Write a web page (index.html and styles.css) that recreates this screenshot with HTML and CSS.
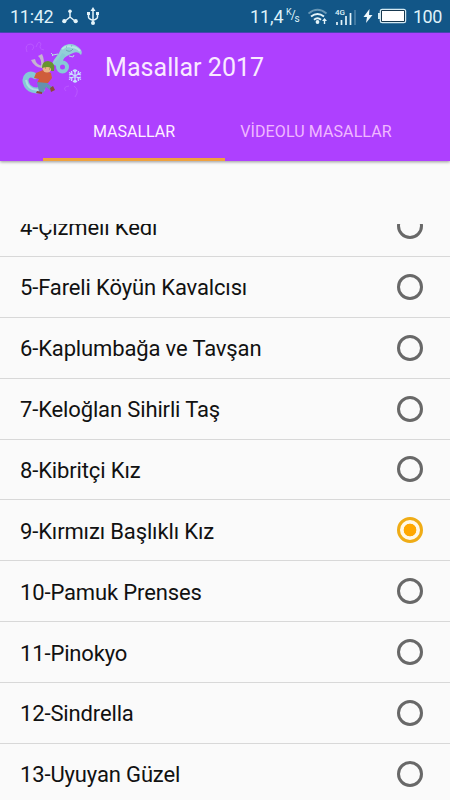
FILE: index.html
```html
<!DOCTYPE html>
<html lang="tr">
<head>
<meta charset="utf-8">
<title>Masallar 2017</title>
<link rel="stylesheet" href="styles.css">
</head>
<body>
<div class="status">
  <span class="clock">11:42</span>
  <svg class="share" width="16" height="15" viewBox="0 0 16 15"><path d="M8 2.500V8M8 8L2.500 12.500M8 8l5.500 4.500" stroke="#e4f4fa" stroke-width="1.500" fill="none"/><g fill="#e4f4fa"><circle cx="8" cy="2.200" r="1.800"/><circle cx="2.300" cy="12.200" r="2.100"/><circle cx="13.700" cy="12.200" r="2.100"/></g></svg>
  <svg class="usb" width="14" height="19" viewBox="0 0 14 19"><path d="M7 2v14M2.500 6v4q0 2 4.500 3.300q4.500-1.300 4.500-3.300V6" fill="none" stroke="#e4f4fa" stroke-width="1.500"/><path d="M7 0l2.500 4h-5z" fill="#e4f4fa"/><path d="M1 5h3v3H1zM10 5h3v3h-3z" fill="#e4f4fa"/><circle cx="7" cy="16" r="2" fill="#e4f4fa"/></svg>
  <span class="speed">11,4</span>
  <span class="unit"><span class="k">K</span><span class="slash">/</span><span class="s">s</span></span>
  <svg class="wifi" width="20" height="17" viewBox="0 0 20 17"><g fill="none" stroke="#e4f4fa" stroke-width="1.900"><path d="M.5 5.500q9-7.500 18 0" opacity=".4"/><path d="M3 8.500q6.500-5 13 0"/><path d="M6 11.700q3.500-3 7 0"/></g><circle cx="9.500" cy="14" r="1.900" fill="#e4f4fa"/><path d="M16.500 10l2.500 3h-1.800v3h-1.400v-3H14z" fill="#e4f4fa"/></svg>
  <span class="cell"><span class="gen">4G</span><svg width="22" height="16" viewBox="0 0 22 16"><path d="M2 15v-3M6.500 15V10M11 15V6M15.500 15V3" stroke="#e4f4fa" stroke-width="1.700"/><path d="M20 15V0" stroke="#e4f4fa" stroke-width="1.500" opacity=".3"/></svg></span>
  <svg class="bolt" width="10" height="14" viewBox="0 0 10 14"><path d="M6.500 0L.5 8H4l-1 6 6.500-8H6z" fill="#f2fafd"/></svg>
  <svg class="battery" width="29" height="16" viewBox="0 0 29 16"><path d="M0 5h2v6H0z" fill="#d5eaf3"/><rect x="1.700" y=".7" width="26.500" height="14.500" rx="2.500" fill="#d5eaf3"/><rect x="3" y="2" width="24" height="12" rx="1" fill="#17384f"/><rect x="4" y="3" width="22" height="10" fill="#fff"/></svg>
  <span class="percent">100</span>
</div>
<header class="appbar">
  <div class="titlebar">
    <svg class="logo" width="62" height="60" viewBox="0 0 62 60">
      <g fill="none" stroke="#bd60ff" stroke-width=".7"><path d="M5 12q-3-8 4-8q5 2 1 6M14 7q3-8 5-3q-3 5 3 6M47 46q-7 1-3 5M52 46q6 4 1 11"/></g>
      <path d="M30 25C31 19 36 16 38 11C41 4 48 3 53 5C59 8 61 12 59 15C55 10 51 13 47 15C41 18 40 20 42 24" fill="#92d0d8"/>
      <ellipse cx="40.500" cy="27" rx="4.500" ry="4.500" fill="none" stroke="#86cbd6" stroke-width="4"/>
      <path d="M33 25Q39 20 42 14" fill="none" stroke="#86cbd6" stroke-width="4"/>
      <path d="M40 9Q45 5 50 7Q54 7 58 11" fill="none" stroke="#b5e6e6" stroke-width="2"/>
      <path d="M44 10q4 3 7-1M44 7h1M49 6h1" stroke="#557f99" fill="none" stroke-width=".6"/>
      <path d="M36 14l-5 1-2-2m2 2-1 1M47 16l4 1 1-2" stroke="#b5dbe2" stroke-width="1" fill="none"/>
      <path d="M13 36C7 32 2 37 4 43C6 50 14 52 20 49" fill="none" stroke="#83c9d7" stroke-width="6" stroke-linecap="round"/>
      <path d="M4 40q2 11 14 10" fill="none" stroke="#aee0e2" stroke-width="2"/>
      <path d="M20 28Q12 27 9 20L13 19Q14 25 21 26ZM19 26Q20 19 16 16L20 14Q23 20 21 26Z" fill="#c5b3d1"/>
      <path d="M14 33L21 30L29 33L30 38L26 43L15 43L17 39L12 38Z" fill="#cf5d3b"/>
      <path d="M15 42L25 43L31 48L28 50L24 47L21 53L17 52Z" fill="#6292b0"/>
      <path d="M28 48l3-2 2 4-4 2zM15 51l5 1v2l-6-1z" fill="#8b4a38"/>
      <circle cx="25" cy="28" r="4.500" fill="#eab586"/><path d="M20 28Q20 21 26 21Q34 22 32 31L29 31Q30 25 20 28" fill="#68932f"/><path d="M23 28h1M27 29h1" stroke="#76483b" stroke-width=".6"/>
      <g stroke="#c8e0ff" stroke-width="1.300" fill="none"><path d="M53 29v14M47 32.500l12 7M59 32.500l-12 7M51 30l2 2 2-2M51 42l2-2 2 2M47 35l3-1-.5-3M59 35l-3-1 .5-3M47 37l3 1-.5 3M59 37l-3 1 .5 3"/></g>
    </svg>
    <h1>Masallar 2017</h1>
  </div>
  <nav><span class="tab active">MASALLAR</span><span class="tab">VİDEOLU MASALLAR</span></nav>
</header>
<main>
  <ul>
    <li><span>4-Çizmeli Kedi</span><i></i></li>
    <li><span>5-Fareli Köyün Kavalcısı</span><i></i></li>
    <li><span>6-Kaplumbağa ve Tavşan</span><i></i></li>
    <li><span>7-Keloğlan Sihirli Taş</span><i></i></li>
    <li><span>8-Kibritçi Kız</span><i></i></li>
    <li><span>9-Kırmızı Başlıklı Kız</span><i class="on"></i></li>
    <li><span>10-Pamuk Prenses</span><i></i></li>
    <li><span>11-Pinokyo</span><i></i></li>
    <li><span>12-Sindrella</span><i></i></li>
    <li><span>13-Uyuyan Güzel</span><i></i></li>
  </ul>
</main>
</body>
</html>
```
FILE: styles.css
```css
* { box-sizing: border-box; }
body { margin: 0; width: 450px; height: 800px; overflow: hidden; display: flex; flex-direction: column; background: #fafafa; font-family: Roboto, "Noto Sans", sans-serif; }
.status { height: 33px; flex: none; display: flex; align-items: center; background: #125687; color: #dff2fa; font-size: 18px; padding-left: 10px; border-bottom: 1px solid #4a4bbd; }
.status svg { flex: none; display: block; }
.clock { width: 52px; letter-spacing: -.3px; }
.share { margin-right: 8px; }
.usb { margin-right: 150px; }
.speed { width: 36px; letter-spacing: -.1px; }
.unit { width: 22px; height: 20px; font-size: 9px; line-height: 12px; display: flex; }
.slash { font-size: 12px; padding-top: 3px; margin: 0 -1px; }
.s { padding-top: 7px; font-size: 10px; }
.wifi { margin-right: 7px; }
.cell { width: 28px; height: 22px; display: flex; flex-direction: column; justify-content: flex-end; }
.gen { font-size: 8px; line-height: 7px; font-weight: 500; margin-bottom: -6px; }
.cell svg { margin-bottom: 1px; }
.bolt { margin-right: 5px; }
.battery { margin-right: 6px; }
.percent { letter-spacing: -.5px; }
.appbar { height: 128px; flex: none; background: #ae40ff; box-shadow: 0 1px 3px rgba(0,0,0,.4); }
.titlebar { height: 70px; display: flex; align-items: center; padding-left: 22px; }
.logo { margin-top: 4px; }
h1 { margin: 0 0 0 21px; font-weight: 400; font-size: 25px; line-height: 30px; color: #f9eaff; letter-spacing: .05px; }
nav { height: 58px; display: flex; padding-left: 43px; font-size: 16px; color: #f0b9ff; }
.tab { width: 182px; padding-top: 2px; display: flex; align-items: center; justify-content: center; border-bottom: 3px solid transparent; white-space: nowrap; }
.tab:last-child { letter-spacing: .1px; }
.tab.active { color: #fff0ff; border-color: #efa13f; }
main { margin-top: 63px; flex: 1; overflow: hidden; }
ul { list-style: none; margin: -27.900px 0 0; padding: 0; }
li { height: 60.870px; padding: 2px 27px 0 20px; display: flex; align-items: center; justify-content: space-between; border-bottom: 1px solid #d8d8d8; font-size: 22px; letter-spacing: -.14px; color: #111; }
i { width: 26px; height: 26px; margin-bottom: 2px; border: 3px solid #686868; border-radius: 50%; }
i.on { border-color: #efac16; background: radial-gradient(circle, #ffa800 0 6px, #fff9e8 6.700px); }
```
